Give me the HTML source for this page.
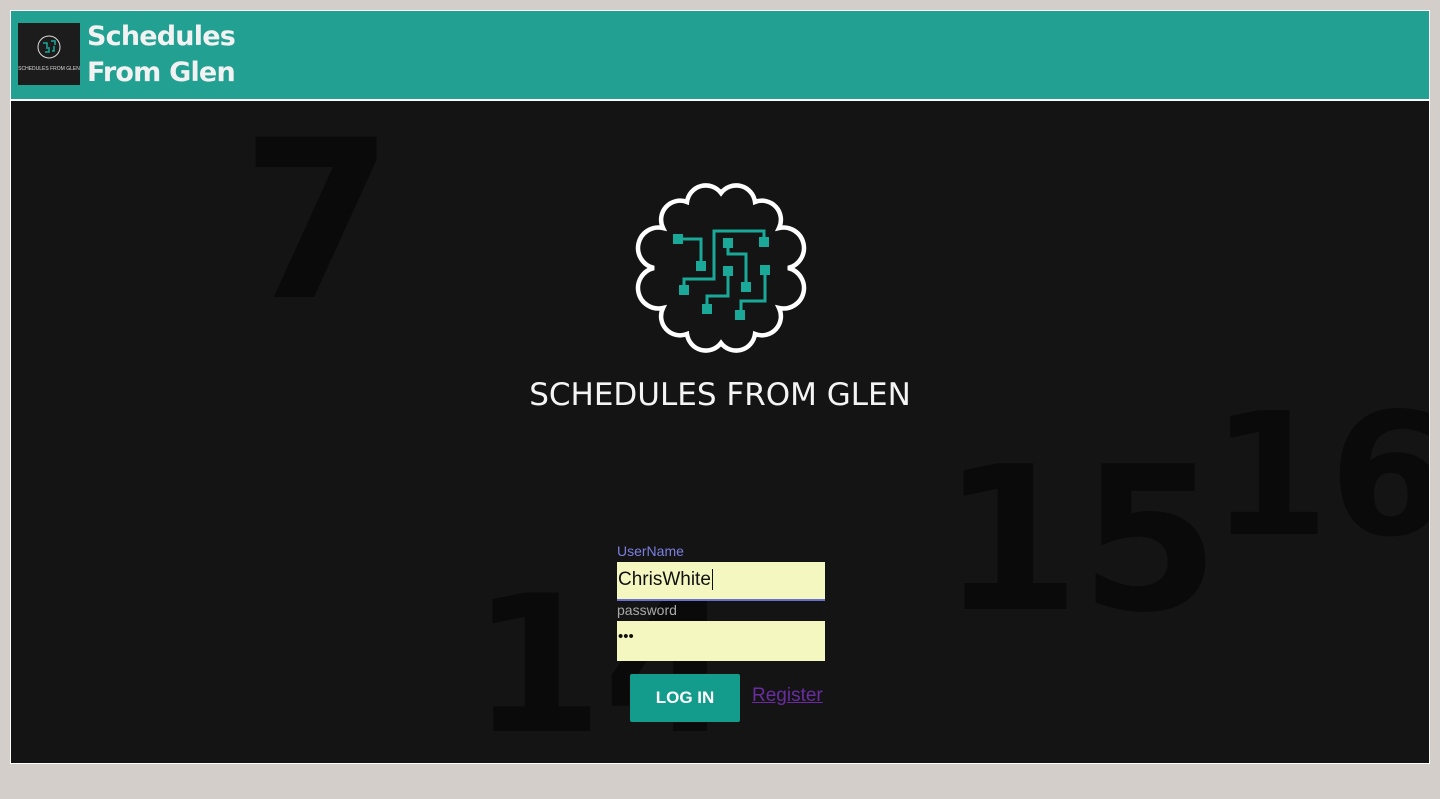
<!DOCTYPE html>
<html><head><meta charset="utf-8"><style>
html,body{margin:0;padding:0;width:1440px;height:799px;overflow:hidden;background:#d3cec9;font-family:"Liberation Sans",sans-serif}
.frame{position:absolute;left:10px;top:10px;width:1418px;height:752px;border:1px solid #fff;background:#141414;overflow:hidden}
.hdr{position:absolute;left:0;top:0;width:1418px;height:88px;background:#22a193;border-bottom:2px solid #fff;z-index:2}
.logo{position:absolute;left:7px;top:12px;width:62px;height:62px;background:#1c1c1c}
.ttl{position:absolute;left:76px;top:8px;color:#f2f2f2;font-family:"DejaVu Sans",sans-serif;font-weight:bold;font-size:27px;line-height:36px;letter-spacing:-0.8px}
.bgn{position:absolute;color:#0a0a0a;font-family:"DejaVu Sans",sans-serif;font-weight:bold;line-height:1}
.big{position:absolute;left:0;top:366px;width:1418px;text-align:center;color:#f4f4f4;font-family:"DejaVu Sans",sans-serif;font-size:31px;letter-spacing:0}
.lbl{position:absolute;font-size:14px}
.inp{position:absolute;left:606px;width:208px;background:#f4f8c0;color:#111;font-size:19px;box-sizing:border-box}
.btn{position:absolute;left:619px;top:663px;width:110px;height:48px;background:#139c8c;border-radius:2px;color:#fff;font-weight:bold;font-size:17px;text-align:center;line-height:48px}
.reg{position:absolute;left:741px;top:674px;color:#6a2ca0;font-size:19px;text-decoration:underline}
</style></head><body>
<div class="frame">
<div class="bgn" style="left:230px;top:100px;font-size:220px">7</div>
<div class="bgn" style="left:930px;top:430px;font-size:200px">15</div>
<div class="bgn" style="left:1200px;top:380px;font-size:170px">16</div>
<div class="bgn" style="left:460px;top:560px;font-size:190px">14</div>
<div class="hdr">
<div class="logo"><svg width="62" height="62" viewBox="0 0 62 62"><circle cx="31" cy="24" r="11" fill="none" stroke="#ddd" stroke-width="1"/><path d="M25 20h4v6M33 18h4v4M27 29h4v-5M34 28h2v-5" stroke="#1aa898" stroke-width="1.5" fill="none"/><text x="31" y="47" font-size="5" fill="#ddd" text-anchor="middle" font-family="Liberation Sans">SCHEDULES FROM GLEN</text></svg></div>
<div class="ttl">Schedules<br>From Glen</div>
</div>
<svg style="position:absolute;left:590px;top:160px" width="240" height="200" viewBox="0 0 240 200">
<path d="M120 22 A19 19 0 0 1 154 31 A19 19 0 0 1 178 57 A19 19 0 0 1 187 97 A19 19 0 0 1 178 137 A19 19 0 0 1 154 163 A19 19 0 0 1 120 172 A19 19 0 0 1 86 163 A19 19 0 0 1 62 137 A19 19 0 0 1 53 97 A19 19 0 0 1 62 57 A19 19 0 0 1 86 31 A19 19 0 0 1 120 22Z" fill="none" stroke="#fff" stroke-width="4.5"/>
<g stroke="#1aa898" stroke-width="3" fill="none">
<path d="M77 68H100V93"/><path d="M83 118V108H113V60H163V70"/><path d="M127 71V83H145V115"/><path d="M106 137V125H127V99"/><path d="M164 98V130H140V143"/></g>
<g fill="#1aa898">
<rect x="72" y="63" width="10" height="10"/><rect x="95" y="90" width="10" height="10"/><rect x="158" y="66" width="10" height="10"/><rect x="78" y="114" width="10" height="10"/><rect x="122" y="67" width="10" height="10"/><rect x="140" y="111" width="10" height="10"/><rect x="122" y="95" width="10" height="10"/><rect x="101" y="133" width="10" height="10"/><rect x="159" y="94" width="10" height="10"/><rect x="134" y="139" width="10" height="10"/></g>
</svg>
<div class="big">SCHEDULES FROM GLEN</div>
<div class="lbl" style="left:606px;top:532px;color:#7b7fe0">UserName</div>
<div class="inp" style="top:551px;height:39px;border-bottom:2px solid #6b6fd0;padding:7px 0 0 1px">ChrisWhite<span style="border-left:1px solid #111;margin-left:1px"></span></div>
<div class="lbl" style="left:606px;top:591px;color:#aaa">password</div>
<div class="inp" style="top:610px;height:40px;padding:7px 0 0 1px;font-size:15px;letter-spacing:0">•••</div>
<div class="btn">LOG IN</div>
<div class="reg">Register</div>
</div>
</body></html>
